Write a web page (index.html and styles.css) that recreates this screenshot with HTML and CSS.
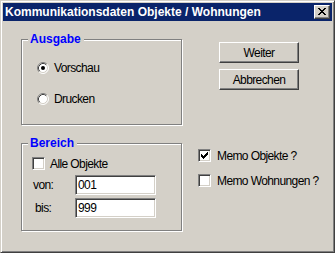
FILE: index.html
```html
<!DOCTYPE html>
<html lang="de">
<head>
<meta charset="utf-8">
<title>Kommunikationsdaten Objekte / Wohnungen</title>
<link rel="stylesheet" href="styles.css">
</head>
<body>
<div class="window">
  <div class="titlebar">
    <span class="title">Kommunikationsdaten Objekte / Wohnungen</span>
    <span class="close-btn">
      <svg width="8" height="7" viewBox="0 0 8 7" shape-rendering="crispEdges">
        <path fill="#000" d="M0 0h2v1H0zM6 0h2v1H6zM1 1h2v1H1zM5 1h2v1H5zM2 2h4v1H2zM3 3h2v1H3zM2 4h4v1H2zM1 5h2v1H1zM5 5h2v1H5zM0 6h2v1H0zM6 6h2v1H6z"/>
      </svg>
    </span>
  </div>
  <div class="client">
    <div class="left-col">
      <div class="group group-output">
        <div class="group-label">Ausgabe</div>
        <div class="option-row option-first">
          <svg class="radio" width="12" height="12" viewBox="0 0 12 12">
            <circle cx="6" cy="6" r="5" fill="#fff"/>
            <path d="M2.11 9.89 A5.5 5.5 0 0 1 9.89 2.11" fill="none" stroke="#808080"/>
            <path d="M9.89 2.11 A5.5 5.5 0 0 1 2.11 9.89" fill="none" stroke="#fff"/>
            <path d="M2.82 9.18 A4.5 4.5 0 0 1 9.18 2.82" fill="none" stroke="#404040"/>
            <path d="M9.18 2.82 A4.5 4.5 0 0 1 2.82 9.18" fill="none" stroke="#d4d0c8"/>
            <circle cx="6" cy="6" r="2" fill="#000"/>
          </svg>
          <span>Vorschau</span>
        </div>
        <div class="option-row option-second">
          <svg class="radio" width="12" height="12" viewBox="0 0 12 12">
            <circle cx="6" cy="6" r="5" fill="#fff"/>
            <path d="M2.11 9.89 A5.5 5.5 0 0 1 9.89 2.11" fill="none" stroke="#808080"/>
            <path d="M9.89 2.11 A5.5 5.5 0 0 1 2.11 9.89" fill="none" stroke="#fff"/>
            <path d="M2.82 9.18 A4.5 4.5 0 0 1 9.18 2.82" fill="none" stroke="#404040"/>
            <path d="M9.18 2.82 A4.5 4.5 0 0 1 2.82 9.18" fill="none" stroke="#d4d0c8"/>
          </svg>
          <span>Drucken</span>
        </div>
      </div>
      <div class="group group-range">
        <div class="group-label">Bereich</div>
        <div class="check-row check-all">
          <span class="checkbox"></span>
          <span>Alle Objekte</span>
        </div>
        <div class="field-row field-first">
          <span class="field-label">von:</span>
          <span class="textbox">001</span>
        </div>
        <div class="field-row field-second">
          <span class="field-label field-label-bis">bis:</span>
          <span class="textbox">999</span>
        </div>
      </div>
    </div>
    <div class="right-col">
      <div class="buttons">
        <div class="button">Weiter</div>
        <div class="button">Abbrechen</div>
      </div>
      <div class="memo">
        <div class="check-row memo-row">
          <span class="checkbox">
            <svg width="7" height="7" viewBox="0 0 7 7" shape-rendering="crispEdges">
              <path fill="#000" d="M6 0h1v1H6zM5 1h2v1H5zM0 2h1v1H0zM4 2h3v1H4zM0 3h2v1H0zM3 3h3v1H3zM0 4h5v1H0zM1 5h3v1H1zM2 6h1v1H2z"/>
            </svg>
          </span>
          <span>Memo Objekte ?</span>
        </div>
        <div class="check-row memo-row memo-second">
          <span class="checkbox"></span>
          <span>Memo Wohnungen ?</span>
        </div>
      </div>
    </div>
  </div>
</div>
</body>
</html>
```
FILE: styles.css
```css
html, body {
  margin: 0;
  padding: 0;
}

body {
  background: #d4d0c8;
  font-family: "Liberation Sans", Arial, sans-serif;
  font-size: 12px;
  letter-spacing: -0.6px;
  color: #000;
}

.window {
  width: 335px;
  height: 253px;
  box-sizing: border-box;
  border: 1px solid;
  border-color: #d4d0c8 #404040 #404040 #d4d0c8;
  padding: 2px;
  box-shadow: inset 1px 1px 0 #fff, inset -1px -1px 0 #808080;
  background: #d4d0c8;
  display: flex;
  flex-direction: column;
}

.titlebar {
  height: 18px;
  flex: none;
  background: #0a246a;
  display: flex;
  align-items: center;
  justify-content: space-between;
  padding: 0 2px 0 2px;
}

.title {
  color: #fff;
  font-weight: bold;
  font-size: 12px;
  letter-spacing: 0;
  white-space: nowrap;
}

.close-btn {
  width: 16px;
  height: 14px;
  box-sizing: border-box;
  border: 1px solid;
  border-color: #fff #404040 #404040 #fff;
  box-shadow: inset -1px -1px 0 #808080;
  background: #d4d0c8;
  display: flex;
  align-items: center;
  justify-content: center;
  padding: 0 1px 1px 0;
}

.close-btn svg {
  display: block;
}

.client {
  flex: 1;
  display: flex;
  padding: 18px 0 0 18px;
}

.left-col {
  width: 161px;
  flex: none;
  display: flex;
  flex-direction: column;
}

.group {
  box-sizing: border-box;
  border: 1px solid #808080;
  box-shadow: inset 1px 1px 0 #fff, 1px 1px 0 #fff;
  display: flex;
  flex-direction: column;
}

.group-output {
  height: 86px;
}

.group-range {
  height: 88px;
  margin-top: 18px;
}

.group-label {
  align-self: flex-start;
  margin: -8px 0 0 6px;
  padding: 0 3px 0 2px;
  background: #d4d0c8;
  color: #0000ff;
  font-weight: bold;
  font-size: 12px;
  line-height: 14px;
  letter-spacing: 0;
}

.option-row {
  display: flex;
  align-items: center;
  gap: 5px;
  height: 16px;
  margin-left: 15px;
}

.option-first {
  margin-top: 14px;
}

.option-second {
  margin-top: 15px;
}

.radio {
  display: block;
  flex: none;
}

.check-row {
  display: flex;
  align-items: center;
  height: 13px;
  gap: 5px;
}

.check-all {
  margin: 7px 0 0 10px;
}

.checkbox {
  width: 13px;
  height: 13px;
  flex: none;
  box-sizing: border-box;
  border: 1px solid;
  border-color: #808080 #fff #fff #808080;
  box-shadow: inset 1px 1px 0 #404040, inset -1px -1px 0 #d4d0c8;
  background: #fff;
  display: flex;
  align-items: center;
  justify-content: center;
}

.checkbox svg {
  display: block;
}

.field-row {
  display: flex;
  align-items: center;
  height: 20px;
  margin-left: 11px;
}

.field-first {
  margin-top: 5px;
}

.field-second {
  margin-top: 3px;
}

.field-label {
  width: 42px;
  flex: none;
}

.field-label-bis {
  width: 40px;
  padding-left: 2px;
}

.textbox {
  width: 81px;
  height: 20px;
  box-sizing: border-box;
  border: 1px solid;
  border-color: #808080 #fff #fff #808080;
  box-shadow: inset 1px 1px 0 #404040, inset -1px -1px 0 #d4d0c8;
  background: #fff;
  padding-left: 2px;
  display: flex;
  align-items: center;
}

.right-col {
  display: flex;
  flex-direction: column;
}

.buttons {
  display: flex;
  flex-direction: column;
  gap: 6px;
  margin: 3px 0 0 37px;
}

.button {
  width: 80px;
  height: 21px;
  box-sizing: border-box;
  border: 1px solid;
  border-color: #fff #404040 #404040 #fff;
  box-shadow: inset -1px -1px 0 #808080;
  display: flex;
  align-items: center;
  justify-content: center;
}

.memo {
  margin: 59px 0 0 16px;
  display: flex;
  flex-direction: column;
}

.memo-row {
  gap: 6px;
  white-space: nowrap;
}

.memo-second {
  margin-top: 12px;
}
```
